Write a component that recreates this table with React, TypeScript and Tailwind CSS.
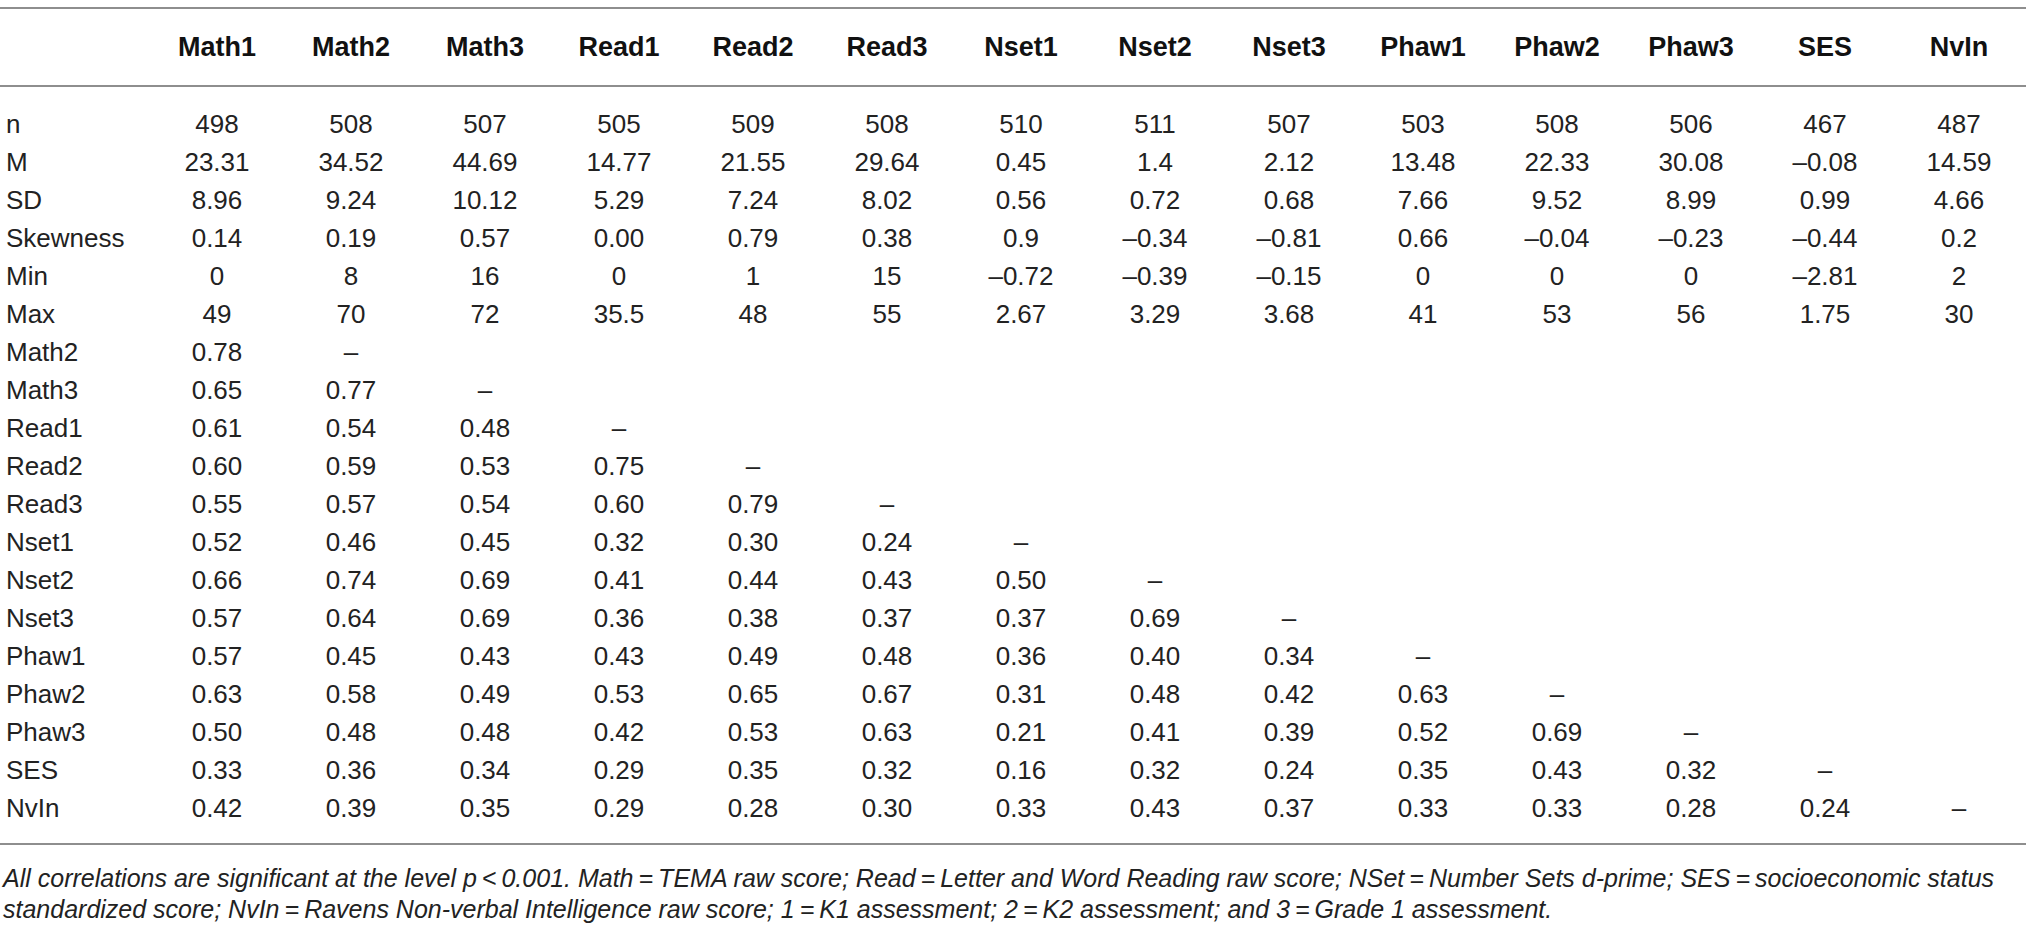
import React from 'react';

const headers = ['Math1', 'Math2', 'Math3', 'Read1', 'Read2', 'Read3', 'Nset1', 'Nset2', 'Nset3', 'Phaw1', 'Phaw2', 'Phaw3', 'SES', 'NvIn'];

const rows: [string, string[]][] = [
  ['n', ['498', '508', '507', '505', '509', '508', '510', '511', '507', '503', '508', '506', '467', '487']],
  ['M', ['23.31', '34.52', '44.69', '14.77', '21.55', '29.64', '0.45', '1.4', '2.12', '13.48', '22.33', '30.08', '–0.08', '14.59']],
  ['SD', ['8.96', '9.24', '10.12', '5.29', '7.24', '8.02', '0.56', '0.72', '0.68', '7.66', '9.52', '8.99', '0.99', '4.66']],
  ['Skewness', ['0.14', '0.19', '0.57', '0.00', '0.79', '0.38', '0.9', '–0.34', '–0.81', '0.66', '–0.04', '–0.23', '–0.44', '0.2']],
  ['Min', ['0', '8', '16', '0', '1', '15', '–0.72', '–0.39', '–0.15', '0', '0', '0', '–2.81', '2']],
  ['Max', ['49', '70', '72', '35.5', '48', '55', '2.67', '3.29', '3.68', '41', '53', '56', '1.75', '30']],
  ['Math2', ['0.78', '–']],
  ['Math3', ['0.65', '0.77', '–']],
  ['Read1', ['0.61', '0.54', '0.48', '–']],
  ['Read2', ['0.60', '0.59', '0.53', '0.75', '–']],
  ['Read3', ['0.55', '0.57', '0.54', '0.60', '0.79', '–']],
  ['Nset1', ['0.52', '0.46', '0.45', '0.32', '0.30', '0.24', '–']],
  ['Nset2', ['0.66', '0.74', '0.69', '0.41', '0.44', '0.43', '0.50', '–']],
  ['Nset3', ['0.57', '0.64', '0.69', '0.36', '0.38', '0.37', '0.37', '0.69', '–']],
  ['Phaw1', ['0.57', '0.45', '0.43', '0.43', '0.49', '0.48', '0.36', '0.40', '0.34', '–']],
  ['Phaw2', ['0.63', '0.58', '0.49', '0.53', '0.65', '0.67', '0.31', '0.48', '0.42', '0.63', '–']],
  ['Phaw3', ['0.50', '0.48', '0.48', '0.42', '0.53', '0.63', '0.21', '0.41', '0.39', '0.52', '0.69', '–']],
  ['SES', ['0.33', '0.36', '0.34', '0.29', '0.35', '0.32', '0.16', '0.32', '0.24', '0.35', '0.43', '0.32', '–']],
  ['NvIn', ['0.42', '0.39', '0.35', '0.29', '0.28', '0.30', '0.33', '0.43', '0.37', '0.33', '0.33', '0.28', '0.24', '–']],
];

const eq = '\u2009=\u2009';

export default function App() {
  return (
    <div className="min-h-screen bg-white pt-[7px] text-[#222] font-['Liberation_Sans',Arial,sans-serif]">
      <table className="w-[2026px] table-fixed border-collapse text-[26px] leading-[38px]">
        <colgroup>
          <col className="w-[150px]" />
          {headers.map((h) => (
            <col key={h} className="w-[134px]" />
          ))}
        </colgroup>
        <thead>
          <tr className="h-[78px] border-y-2 border-[#8e8e8e]">
            <th />
            {headers.map((h) => (
              <th key={h} className="text-center text-[27px] font-bold text-[#111]">
                {h}
              </th>
            ))}
          </tr>
        </thead>
        <tbody>
          {/* spacer under header rule */}
          <tr className="h-[19px]">
            <td colSpan={15} />
          </tr>
          {rows.map(([label, vals]) => (
            <tr key={label} className="h-[38px]">
              <td className="pl-[6px] text-left">{label}</td>
              {headers.map((h, i) => (
                <td key={h} className="text-center">
                  {vals[i] ?? ''}
                </td>
              ))}
            </tr>
          ))}
          <tr className="h-[17px] border-b-2 border-[#8e8e8e]">
            <td colSpan={15} />
          </tr>
        </tbody>
      </table>

      {/* table note */}
      <p className="w-[2026px] whitespace-nowrap pt-[18px] pl-[3px] text-[25px] leading-[31px] italic">
        All correlations are significant at the level p{'\u2009<\u2009'}0.001. Math{eq}TEMA raw score; Read{eq}Letter and Word
        Reading raw score; NSet{eq}Number Sets d-prime; SES{eq}socioeconomic status
        <br />
        standardized score; NvIn{eq}Ravens Non-verbal Intelligence raw score; 1{eq}K1 assessment; 2{eq}K2 assessment; and
        3{eq}Grade 1 assessment.
      </p>
    </div>
  );
}
